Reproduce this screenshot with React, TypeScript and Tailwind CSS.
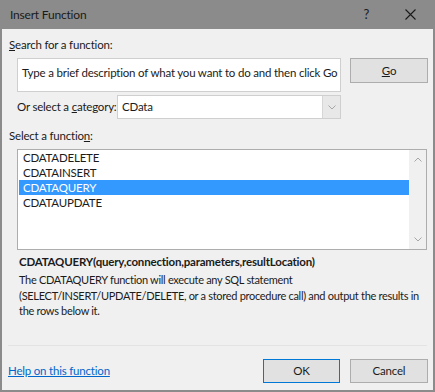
import { FC } from 'react';

const items = ['CDATADELETE', 'CDATAINSERT', 'CDATAQUERY', 'CDATAUPDATE'];

const Chevron: FC<{ up?: boolean }> = ({ up }) => (
  <svg width="8" height="5" viewBox="0 0 8 5" className="block">
    <path
      d={up ? 'M0.5 4.5 L4 1 L7.5 4.5' : 'M0.5 0.5 L4 4 L7.5 0.5'}
      fill="none"
      stroke="#a6a6a6"
      strokeWidth="1"
    />
  </svg>
);

const App: FC = () => (
  <div className="w-[435px] h-[392px] flex flex-col border-x-2 border-b-2 border-[#8b8b8b] bg-[#f0f0f0] text-[11.5px] tracking-[-0.2px] text-[#1b1b1b] font-['Lato',sans-serif] leading-none">
    {/* title bar */}
    <div className="h-[29px] shrink-0 bg-[#8b8b8b] flex items-center -mx-[2px] px-[2px]">
      <span className="pl-[8px] text-[12px] text-[#1a1a1a] flex-1">Insert Function</span>
      <span className="text-[13px] text-[#1a1a1a] mr-[36px]">?</span>
      <svg width="11" height="11" viewBox="0 0 11 11" className="mr-[17px]">
        <path d="M0.5 0.5 L10.5 10.5 M10.5 0.5 L0.5 10.5" stroke="#1a1a1a" strokeWidth="1.1" />
      </svg>
    </div>

    <div className="flex flex-col pl-[7px] pr-[5px]">
      <div className="mt-[9px] h-[14px] flex items-center">
        <span><span className="underline">S</span>earch for a function:</span>
      </div>

      <div className="mt-[6px] flex ml-[8px] gap-[9px]">
        <div className="w-[324px] h-[34px] bg-white border border-[#cfcfcf] px-[4px] pt-[7px] leading-[14px] whitespace-nowrap">
          Type a brief description of what you want to do and then click Go
        </div>
        <button className="w-[78px] h-[25px] bg-[#e1e1e1] border border-[#adadad] flex items-center justify-center">
          <span><span className="underline">G</span>o</span>
        </button>
      </div>

      <div className="mt-[3px] ml-[8px] flex items-center">
        <span className="w-[100px] whitespace-nowrap">Or select a <span className="underline">c</span>ategory:</span>
        <div className="w-[224px] h-[24px] bg-white border border-[#cfcfcf] flex items-center">
          <span className="flex-1 pl-[4px]">CData</span>
          <div className="w-[18px] h-full bg-[#e8e8e8] border-l border-[#d6d6d6] flex items-center justify-center">
            <Chevron />
          </div>
        </div>
      </div>

      <div className="mt-[10px] h-[14px] flex items-center">
        <span>Select a functio<span className="underline">n</span>:</span>
      </div>

      <div className="mt-[6px] ml-[8px] w-[410px] h-[101px] bg-white border border-[#adadad] flex">
        <div className="flex-1 flex flex-col pl-[1px]">
          {items.map((it) => (
            <div
              key={it}
              className={`h-[15px] flex items-center pl-[4px] ${
                it === 'CDATAQUERY' ? 'bg-[#3399ff] text-white' : ''
              }`}
            >
              {it}
            </div>
          ))}
        </div>
        <div className="w-[17px] bg-[#f0f0f0] flex flex-col items-center justify-between py-[7px]">
          <Chevron up />
          <Chevron />
        </div>
      </div>

      <div className="ml-[10px] mt-[4px] font-bold leading-[16px]">
        CDATAQUERY(query,connection,parameters,resultLocation)
      </div>
      <div className="ml-[10px] mt-[2px] text-[11px] tracking-[-0.3px] leading-[15.5px] whitespace-nowrap">
        The CDATAQUERY function will execute any SQL statement<br />
        (SELECT/INSERT/UPDATE/DELETE, or a stored procedure call) and output the results in<br />
        the rows below it.
      </div>
    </div>

    <div className="flex-1" />

    <div className="mx-[6px] border-t border-[#e3e3e3]" />

    <div className="flex items-center pl-[6px] pr-[5px] mt-[13px] mb-[7px]">
      <a className="flex-1 text-[#0066cc] underline">Help on this function</a>
      <button className="w-[77px] h-[24px] bg-[#e1e1e1] border border-[#0078d7] mr-[10px]">OK</button>
      <button className="w-[78px] h-[24px] bg-[#e1e1e1] border border-[#adadad]">Cancel</button>
    </div>
  </div>
);

export default App;
